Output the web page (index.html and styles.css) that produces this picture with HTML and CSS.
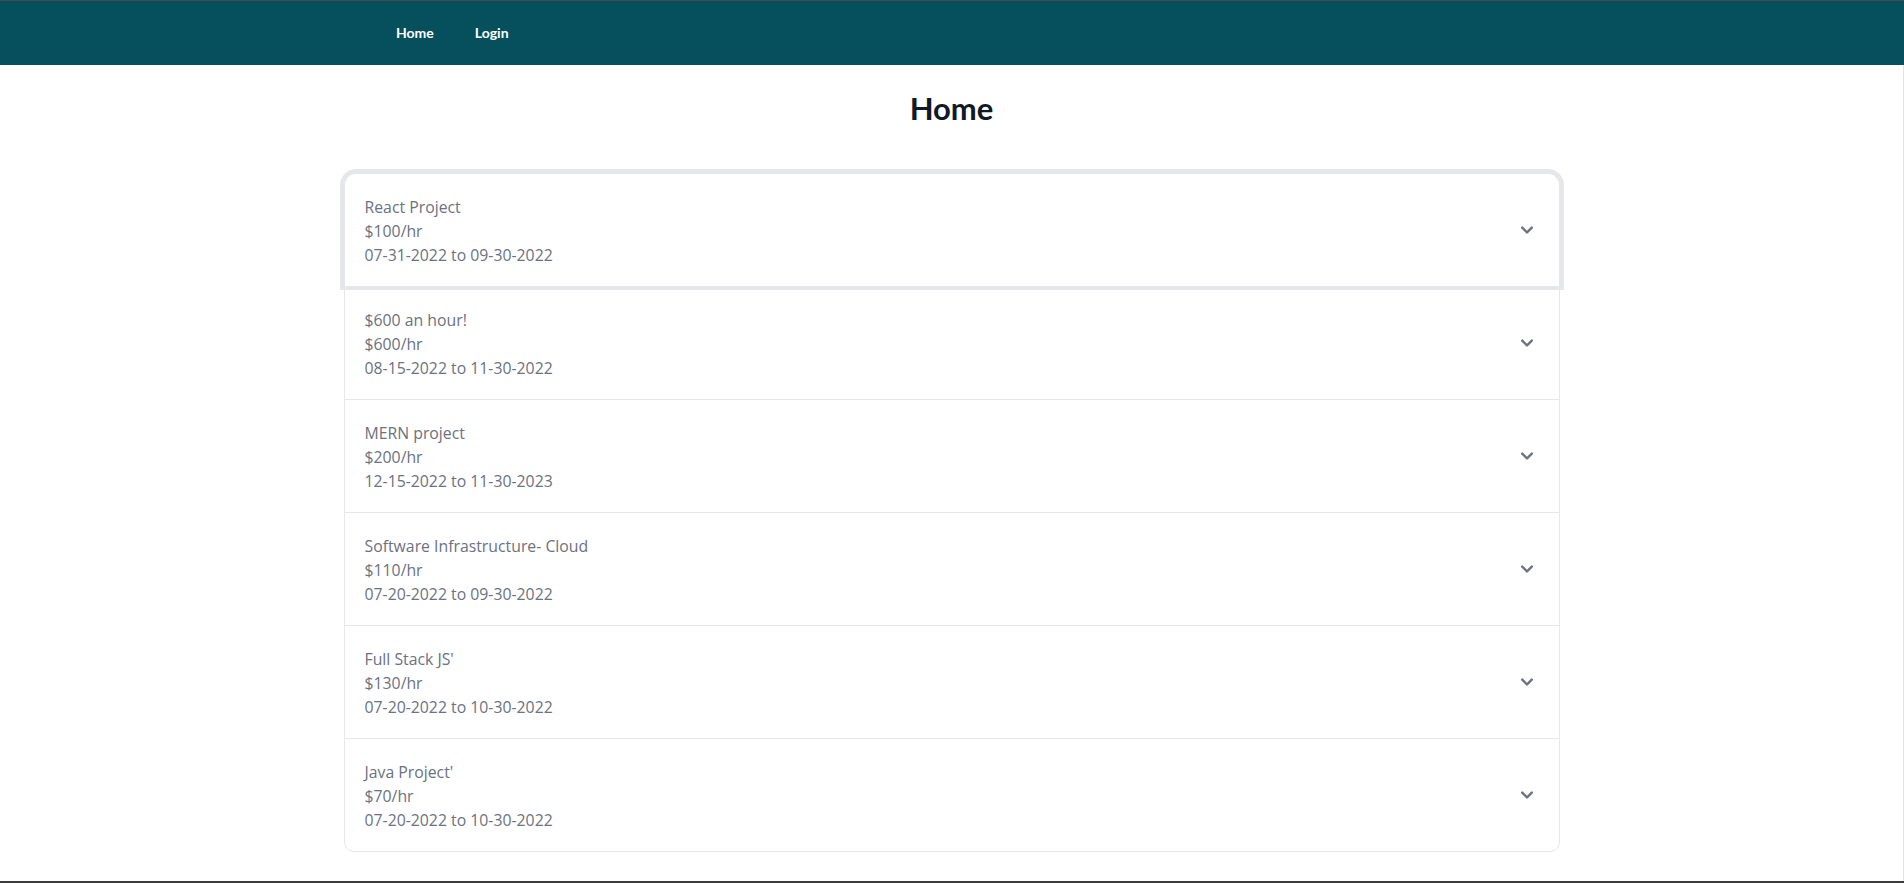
FILE: index.html
```html
<!DOCTYPE html>
<html lang="en">
<head>
<meta charset="utf-8">
<title>Home</title>
<link rel="stylesheet" href="styles.css">
</head>
<body>
<nav class="navbar">
  <a class="nav-link" href="#">Home</a>
  <a class="nav-link" href="#">Login</a>
</nav>
<main class="page">
  <h1 class="title">Home</h1>
  <div class="accordion">
    <div class="item first">
      <div class="info"><div>React Project</div><div>$100/hr</div><div>07-31-2022 to 09-30-2022</div></div>
      <svg class="chev" viewBox="0 0 20 20"><path fill="currentColor" d="M5.293 7.293a1 1 0 011.414 0L10 10.586l3.293-3.293a1 1 0 111.414 1.414l-4 4a1 1 0 01-1.414 0l-4-4a1 1 0 010-1.414z"/></svg>
    </div>
    <div class="item">
      <div class="info"><div>$600 an hour!</div><div>$600/hr</div><div>08-15-2022 to 11-30-2022</div></div>
      <svg class="chev" viewBox="0 0 20 20"><path fill="currentColor" d="M5.293 7.293a1 1 0 011.414 0L10 10.586l3.293-3.293a1 1 0 111.414 1.414l-4 4a1 1 0 01-1.414 0l-4-4a1 1 0 010-1.414z"/></svg>
    </div>
    <div class="item">
      <div class="info"><div>MERN project</div><div>$200/hr</div><div>12-15-2022 to 11-30-2023</div></div>
      <svg class="chev" viewBox="0 0 20 20"><path fill="currentColor" d="M5.293 7.293a1 1 0 011.414 0L10 10.586l3.293-3.293a1 1 0 111.414 1.414l-4 4a1 1 0 01-1.414 0l-4-4a1 1 0 010-1.414z"/></svg>
    </div>
    <div class="item">
      <div class="info"><div>Software Infrastructure- Cloud</div><div>$110/hr</div><div>07-20-2022 to 09-30-2022</div></div>
      <svg class="chev" viewBox="0 0 20 20"><path fill="currentColor" d="M5.293 7.293a1 1 0 011.414 0L10 10.586l3.293-3.293a1 1 0 111.414 1.414l-4 4a1 1 0 01-1.414 0l-4-4a1 1 0 010-1.414z"/></svg>
    </div>
    <div class="item">
      <div class="info"><div>Full Stack JS'</div><div>$130/hr</div><div>07-20-2022 to 10-30-2022</div></div>
      <svg class="chev" viewBox="0 0 20 20"><path fill="currentColor" d="M5.293 7.293a1 1 0 011.414 0L10 10.586l3.293-3.293a1 1 0 111.414 1.414l-4 4a1 1 0 01-1.414 0l-4-4a1 1 0 010-1.414z"/></svg>
    </div>
    <div class="item last">
      <div class="info"><div>Java Project'</div><div>$70/hr</div><div>07-20-2022 to 10-30-2022</div></div>
      <svg class="chev" viewBox="0 0 20 20"><path fill="currentColor" d="M5.293 7.293a1 1 0 011.414 0L10 10.586l3.293-3.293a1 1 0 111.414 1.414l-4 4a1 1 0 01-1.414 0l-4-4a1 1 0 010-1.414z"/></svg>
    </div>
  </div>
</main>
</body>
</html>
```
FILE: styles.css
```css
* { box-sizing: border-box; }
html, body { margin: 0; padding: 0; }
body {
  height: 100vh;
  overflow: hidden;
  display: flex;
  flex-direction: column;
  border-top: 1px solid #4a4a4a;
  border-bottom: 2px solid #3b3b3b;
  font-family: Lato, "Open Sans", sans-serif;
  background: #ffffff;
}
.navbar {
  height: 64px;
  flex: none;
  background: #05505c;
  display: flex;
  align-items: center;
  padding-left: 396px;
  gap: 41px;
}
.nav-link {
  color: #ffffff;
  text-decoration: none;
  font-weight: 700;
  font-size: 14px;
  line-height: 20px;
}
.page {
  flex: 1;
  border-right: 1px solid #e3e3e3;
  padding-top: 25px;
}
.title {
  margin: 0;
  text-align: center;
  font-size: 31px;
  line-height: 36px;
  font-weight: 700;
  color: #111827;
}
.accordion {
  width: 1216px;
  margin: 47px auto 0;
}
.item {
  display: flex;
  align-items: center;
  justify-content: space-between;
  padding: 20px;
  border: 1px solid #e5e7eb;
  border-bottom: 0;
  color: #6b7280;
  font-family: "Open Sans", Lato, sans-serif;
  font-size: 15.8px;
  line-height: 24px;
  font-weight: 500;
  background: #fff;
}
.info {
  padding-top: 1px;
  margin-bottom: -1px;
}
.item.first {
  border-radius: 12px 12px 0 0;
  box-shadow: 0 0 0 4px #e5e7eb;
  position: relative;
  z-index: 1;
}
.item.last {
  border-bottom: 1px solid #e5e7eb;
  border-radius: 0 0 10px 10px;
}
.chev {
  width: 24px;
  height: 24px;
  flex: none;
  color: #6b7280;
}
```
